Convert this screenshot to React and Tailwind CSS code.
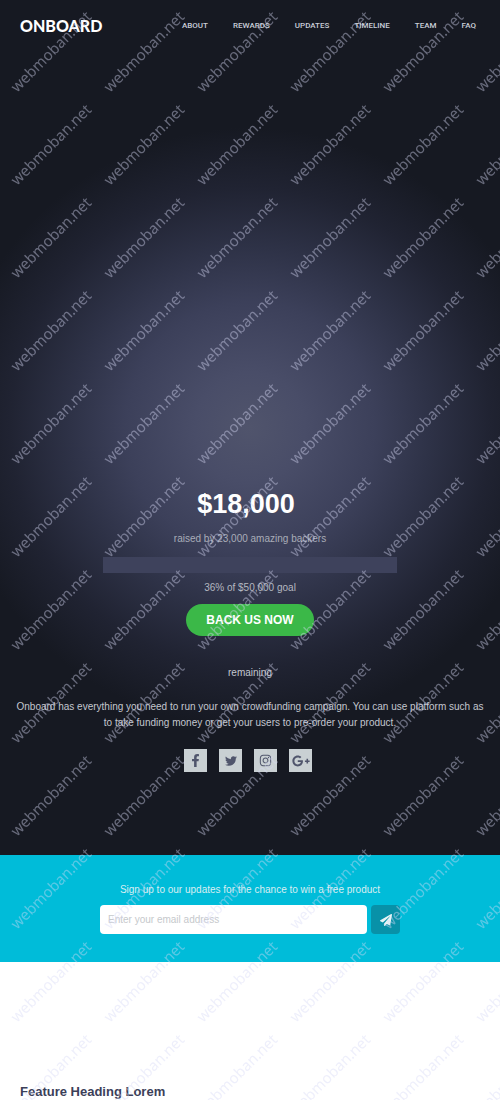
import { FaFacebookF, FaTwitter, FaInstagram, FaGooglePlusG, FaPaperPlane } from "react-icons/fa";

const links = ["About", "Rewards", "Updates", "Timeline", "Team", "FAQ"];

const socials = [
  { name: "Facebook", Icon: FaFacebookF, size: "text-[13px]" },
  { name: "Twitter", Icon: FaTwitter, size: "text-xs" },
  { name: "Instagram", Icon: FaInstagram, size: "text-[13px]" },
  { name: "Google Plus", Icon: FaGooglePlusG, size: "text-lg" },
];

function Watermark() {
  return (
    <svg className="pointer-events-none absolute inset-0 h-full w-full" aria-hidden="true">
      <defs>
        <pattern id="mark" x="8" y="8" width="93" height="93" patternUnits="userSpaceOnUse">
          <text
            x="9"
            y="85"
            transform="rotate(-45 9 85)"
            fontSize="15"
            fill="#d6d8f6"
            fillOpacity="0.42"
            fontFamily="'Noto Sans', sans-serif"
          >
            webmoban.net
          </text>
        </pattern>
      </defs>
      <rect width="100%" height="100%" fill="url(#mark)" />
    </svg>
  );
}

function Header() {
  return (
    <header className="flex items-center justify-between pt-4 pr-6 pl-5">
      <a href="#top" className="font-['Lato',sans-serif] text-base leading-5 font-black text-white">
        ONBOARD
      </a>
      <nav className="flex gap-[25px] text-[8px] leading-5 font-medium text-[#c9ced8] uppercase font-['Roboto',sans-serif]">
        {links.map((link) => (
          <a key={link} href={`#${link.toLowerCase()}`}>
            {link}
          </a>
        ))}
      </nav>
    </header>
  );
}

function Hero() {
  return (
    <section
      id="top"
      className="bg-[#161922] bg-[radial-gradient(circle_at_50%_50%,#50546c_0px,#494d68_55px,#3c405a_125px,#2e3247_180px,#202332_240px,#161922_300px)] pb-[83px]"
    >
      <Header />
      <div className="flex flex-col items-center px-[14px] pt-[448px] text-center text-[10px] leading-4 text-[#c3c7cf]">
        <h1 className="pr-2 text-[27px] leading-10 font-bold text-white">$18,000</h1>
        <p className="mt-[7px] text-[#a9adb8]">raised by 23,000 amazing backers</p>
        <div
          role="progressbar"
          aria-label="Funding progress"
          aria-valuenow={36}
          className="mt-[10px] h-4 w-[294px] max-w-full bg-[#3e425c]"
        />
        <p className="mt-[7px] text-[#b4b8c0]">36% of $50,000 goal</p>
        <button type="button" className="mt-2 h-8 w-32 rounded-full bg-[#3bb848] text-xs font-bold text-white">
          BACK US NOW
        </button>
        <p className="mt-[29px]">remaining</p>
        <p className="mt-[18px]">
          Onboard has everything you need to run your own crowdfunding campaign. You can use platform such as to take
          funding money or get your users to pre-order your product.
        </p>
        <ul className="mt-[18px] flex gap-3 pr-1">
          {socials.map(({ name, Icon, size }) => (
            <li key={name}>
              <a
                href="#social"
                aria-label={name}
                className={`flex size-[23px] items-center justify-center bg-[#c9d0d3] text-[#50556c] ${size}`}
              >
                <Icon />
              </a>
            </li>
          ))}
        </ul>
      </div>
    </section>
  );
}

function Signup() {
  return (
    <section className="flex flex-col items-center bg-[#00bcd9] px-5 pt-[27px] pb-7 text-[10px]">
      <label htmlFor="email" className="leading-4 text-[#d8eef2]">
        Sign up to our updates for the chance to win a free product
      </label>
      <form className="mt-[7px] flex w-[300px] max-w-full gap-1" onSubmit={(e) => e.preventDefault()}>
        <input
          id="email"
          type="email"
          placeholder="Enter your email address"
          className="h-[29px] min-w-0 flex-1 rounded-sm bg-white px-2 text-[#3c4059] placeholder:text-[#c6c9cc]"
        />
        <button
          type="submit"
          aria-label="Subscribe"
          className="flex h-[29px] w-[29px] items-center justify-center rounded-sm bg-[#0891a8] text-xs text-[#e6f3f5]"
        >
          <FaPaperPlane />
        </button>
      </form>
    </section>
  );
}

export default function App() {
  return (
    <div className="relative bg-white font-['Liberation_Sans',Arial,sans-serif]">
      <Hero />
      <Signup />
      <section className="px-5 pt-[120px]">
        <h2 className="text-[13px] leading-5 font-bold text-[#3c4059]">Feature Heading Lorem</h2>
      </section>
      <Watermark />
    </div>
  );
}
